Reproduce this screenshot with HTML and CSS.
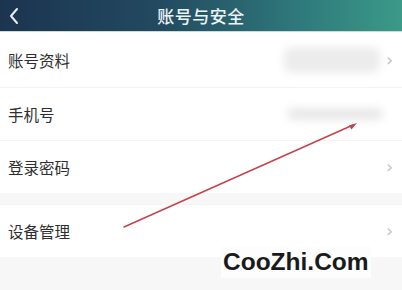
FILE: index.html
```html
<!DOCTYPE html>
<html lang="zh-CN">
<head>
<meta charset="utf-8">
<link rel="stylesheet" href="styles.css">
</head>
<body>
<div class="page">
  <header class="topbar">
    <span class="back"><svg width="12" height="18" viewBox="0 0 12 18"><path d="M9 2 L3 9 L9 16" fill="none" stroke="#e8eef2" stroke-width="2" stroke-linecap="round" stroke-linejoin="round"/></svg></span>
    <h1 class="title">账号与安全</h1>
  </header>
  <div class="group">
    <div class="row row-first">
      <span class="label">账号资料</span>
      <span class="right"><span class="blur blur-profile"></span><span class="chev">›</span></span>
    </div>
    <div class="row">
      <span class="label">手机号</span>
      <span class="right"><span class="blur blur-phone"></span></span>
    </div>
    <div class="row">
      <span class="label">登录密码</span>
      <span class="right"><span class="chev">›</span></span>
    </div>
  </div>
  <div class="group">
    <div class="row">
      <span class="label">设备管理</span>
      <span class="right"><span class="chev">›</span></span>
    </div>
  </div>
  <div class="footer"></div>
  <div class="mark">CooZhi.Com</div>
  <svg class="arrow" width="402" height="290" viewBox="0 0 402 290">
    <line x1="124" y1="227" x2="353" y2="125" stroke="#c4414a" stroke-width="1.4" stroke-linecap="round"/>
    <path d="M357 123 L349 125.5 L351.5 129.5 Z" fill="#c4414a"/>
  </svg>
</div>
</body>
</html>
```
FILE: styles.css
```css
* { box-sizing: border-box; margin: 0; padding: 0; }
html, body { width: 402px; height: 290px; overflow: hidden; }
body { background: #f7f7f7; font-family: "Noto Sans CJK SC", "Noto Sans", sans-serif; }
.page { position: relative; width: 402px; height: 290px; display: flex; flex-direction: column; }
.topbar {
  height: 32px; flex: none; display: flex; align-items: center; justify-content: center; position: relative;
  background: linear-gradient(90deg, #1c3450 0%, #224a60 40%, #2f7a7c 75%, #3b9a88 100%);
  border-bottom: 1px solid #c9dcdc;
}
.back { position: absolute; left: 8px; top: 7px; display: flex; }
.title { font-size: 17px; font-weight: 500; color: #eef3f4; letter-spacing: 0.5px; line-height: 1; }
.group { background: #fff; display: flex; flex-direction: column; }
.group + .group { margin-top: 11px; }
.row { height: 53px; display: flex; align-items: center; justify-content: space-between; padding: 0 8px 0 8px; border-top: 1px solid #f4f4f4; }
.row-first { height: 55px; border-top: none; }
.label { font-size: 15.5px; color: #2e2e2e; }
.right { display: flex; align-items: center; gap: 4px; }
.chev { font-size: 18px; color: #c4c4c4; font-family: "DejaVu Sans", sans-serif; line-height: 1; width: 8px; }
.blur { display: block; background: #ececec; filter: blur(4px); border-radius: 8px; }
.blur-profile { width: 96px; height: 26px; margin-right: 2px; }
.blur-phone { width: 96px; height: 12px; margin-right: 11px; background: #e8e8e8; }
.footer { flex: 1; background: #f7f7f7; }
.mark {
  position: absolute; left: 221px; top: 246px; padding: 0 2px;
  font-family: "Liberation Sans", Arial, sans-serif; font-weight: 700; font-size: 24.5px; color: #1a1a1a;
  background: #fdfdfd; line-height: 32px;
}
.arrow { position: absolute; left: 0; top: 0; pointer-events: none; }
```
